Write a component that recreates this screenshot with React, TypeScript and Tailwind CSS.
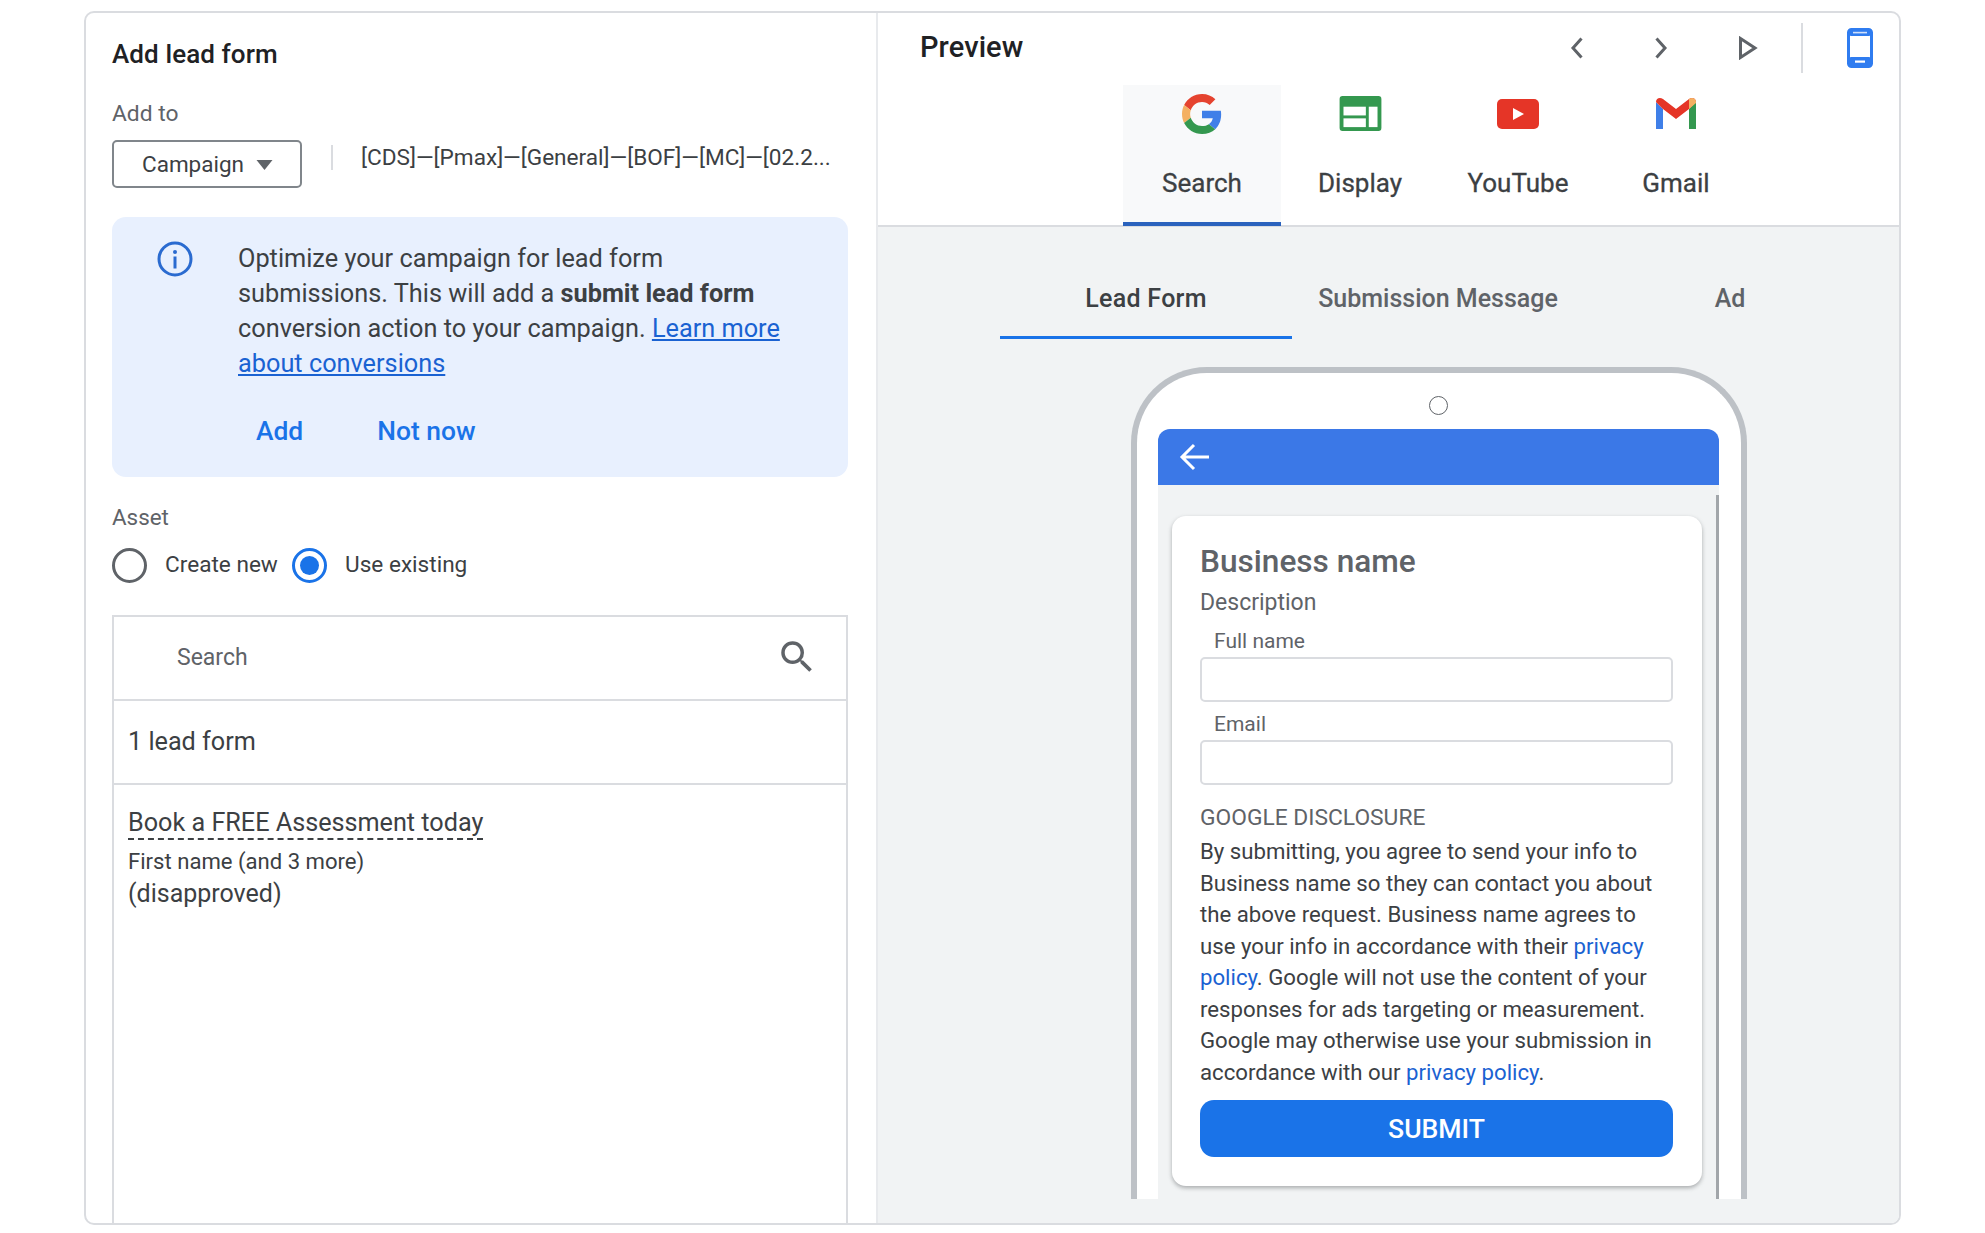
import React from "react";

function Field({ label }: { label: string }) {
  return (
    <div>
      <div className="ml-[14px] text-[21px] leading-[26px] text-[#5f6368]">{label}</div>
      <div className="mt-[3px] h-[45px] w-[473px] rounded-[5px] border-2 border-[#dadce0] bg-white" />
    </div>
  );
}

function ChannelTab({ label, active, children }: { label: string; active?: boolean; children: React.ReactNode }) {
  return (
    <div className={`flex h-[141px] w-[158px] flex-col items-center ${active ? "border-b-[4px] border-[#2a62bd] bg-[#f8f9fa]" : ""}`}>
      <div className="flex h-[56px] w-full items-center justify-center pt-[1px]">{children}</div>
      <div className="mt-[27px] text-[26px] leading-[30px] font-normal text-[#3c4043] [-webkit-text-stroke:0.3px_#3c4043]">{label}</div>
    </div>
  );
}

function SubTab({ label, active }: { label: string; active?: boolean }) {
  return (
    <div className={`flex h-[79px] w-[292px] items-center justify-center border-b-[3px] pt-[1px] text-[25px] font-medium ${active ? "border-[#1a73e8] tracking-[0.3px] text-[#3c4043]" : "border-transparent text-[#5f6368]"}`}>
      {label}
    </div>
  );
}

export default function App() {
  return (
    <div className="h-[1233px] w-[1985px] overflow-hidden bg-white pt-[11px] pl-[84px] font-['Roboto',sans-serif]">
      <div className="flex h-[1214px] w-[1817px] overflow-hidden rounded-[10px] border-2 border-[#dadce0] bg-white">
        {/* Left column */}
        <div className="flex h-full w-[792px] shrink-0 flex-col border-r-2 border-[#e8eaed] pr-[29px] pl-[26px]">
          <h1 className="mt-[25px] text-[26px] leading-[32px] font-medium tracking-[0.1px] text-[#202124]">Add lead form</h1>
          <div className="mt-[30px] text-[22.8px] leading-[28px] text-[#5f6368]">Add to</div>
          <div className="mt-[12px] flex items-start">
            <div className="flex h-[48px] w-[190px] items-center rounded-[5px] border-2 border-[#80868b] pt-[1px] pl-[28px] text-[22.5px] text-[#3c4043]">
              Campaign
              <svg viewBox="0 0 16 10" className="ml-[12px] h-[10px] w-[17px]"><path d="M0 0h16L8 10z" fill="#5f6368" /></svg>
            </div>
            <div className="mt-[5px] ml-[29px] h-[25px] w-[2px] bg-[#dadce0]" />
            <div className="ml-[28px] text-[22.6px] leading-[36px] whitespace-nowrap text-[#3c4043]">[CDS]—[Pmax]—[General]—[BOF]—[MC]—[02.2...</div>
          </div>

          <div className="mt-[29px] flex h-[260px] w-[736px] shrink-0 rounded-[14px] bg-[#e8f0fe]">
            <div className="mt-[24px] ml-[45px] h-[36px] w-[36px] shrink-0">
              <svg viewBox="0 0 36 36" className="h-[36px] w-[36px]" fill="none">
                <circle cx="18" cy="18" r="16" stroke="#2a6bd0" strokeWidth="3" />
                <circle cx="18" cy="11" r="2" fill="#2a6bd0" />
                <rect x="16.5" y="15.5" width="3" height="12" fill="#2a6bd0" />
              </svg>
            </div>
            <div className="ml-[45px] w-[570px]">
              <p className="mt-[24px] text-[25.3px] leading-[35px] text-[#3c4043]">
                Optimize your campaign for lead form submissions. This will add a <b className="font-bold">submit lead form</b> conversion action to your campaign.{" "}
                <a className="text-[#1a62d2] underline">Learn more about conversions</a>
              </p>
              <div className="mt-[35px] ml-[18px] flex gap-[74px] text-[26.4px] leading-[30px] font-medium text-[#1a73e8]">
                <span>Add</span>
                <span>Not now</span>
              </div>
            </div>
          </div>

          <div className="mt-[26px] text-[22.4px] leading-[28px] text-[#5f6368]">Asset</div>
          <div className="mt-[16px] flex h-[36px] items-center text-[22.6px] text-[#3c4043]">
            <div className="h-[35px] w-[35px] rounded-full border-[3px] border-[#5f6368]" />
            <span className="ml-[18px] w-[127px]">Create new</span>
            <div className="flex h-[35px] w-[35px] items-center justify-center rounded-full border-[3px] border-[#1a73e8]">
              <div className="h-[19px] w-[19px] rounded-full bg-[#1a73e8]" />
            </div>
            <span className="ml-[18px]">Use existing</span>
          </div>

          <div className="mt-[32px] flex w-[736px] flex-1 flex-col border-x-2 border-t-2 border-[#dadce0]">
            <div className="flex h-[84px] shrink-0 items-center border-b-2 border-[#dadce0] pr-[28px] pl-[63px] text-[23px] text-[#5f6368]">
              <span className="flex-1">Search</span>
              <svg viewBox="0 0 24 24" className="-mt-[3px] h-[42px] w-[42px]" fill="#5f6368">
                <path d="M15.5 14h-.79l-.28-.27A6.47 6.47 0 0 0 16 9.5 6.5 6.5 0 1 0 9.5 16c1.61 0 3.09-.59 4.23-1.57l.27.28v.79l5 4.99L20.49 19l-4.99-5zm-6 0C7.01 14 5 11.99 5 9.5S7.01 5 9.5 5 14 7.01 14 9.5 11.99 14 9.5 14z" />
              </svg>
            </div>
            <div className="flex h-[84px] shrink-0 items-center border-b-2 border-[#dadce0] pl-[14px] text-[25.2px] text-[#3c4043]">1 lead form</div>
            <div className="pt-[23px] pl-[14px] text-[#3c4043]">
              <div className="w-fit border-b-2 border-dashed border-[#3c4043] text-[25.2px] leading-[30px]">Book a FREE Assessment today</div>
              <div className="mt-[7px] text-[22.1px] leading-[28px]">First name (and 3 more)</div>
              <div className="mt-[3px] text-[25px] leading-[32px]">(disapproved)</div>
            </div>
          </div>
        </div>

        {/* Right column */}
        <div className="flex h-full flex-1 flex-col">
          <div className="flex h-[72px] shrink-0 items-center pb-[2px] pl-[42px] text-[#202124]">
            <span className="w-[106px] text-[29px] font-medium tracking-[0.1px]">Preview</span>
            <svg viewBox="0 0 16 24" className="ml-[543px] h-[24px] w-[16px]" fill="none" stroke="#5f6368" strokeWidth="3"><path d="M12.5 2.5 4 12l8.5 9.5" /></svg>
            <svg viewBox="0 0 16 24" className="ml-[68px] h-[24px] w-[16px]" fill="none" stroke="#5f6368" strokeWidth="3"><path d="M3.5 2.5 12 12l-8.5 9.5" /></svg>
            <svg viewBox="0 0 20 24" className="ml-[69px] h-[24px] w-[20px]" fill="none" stroke="#5f6368" strokeWidth="3"><path d="M2.5 2.5v19L17 12z" /></svg>
            <div className="ml-[43px] h-[50px] w-[2px] bg-[#dadce0]" />
            <svg viewBox="0 0 26 40" className="ml-[44px] h-[40px] w-[26px]" fill="none">
              <rect x="1.5" y="1.5" width="23" height="37" rx="3" fill="#fff" stroke="#2f7cf0" strokeWidth="3" />
              <rect x="2" y="2" width="22" height="6" rx="2" fill="#2f7cf0" />
              <rect x="6" y="3.8" width="14" height="1.6" fill="#cfe0fb" />
              <rect x="2" y="29" width="22" height="9" rx="2" fill="#2f7cf0" />
              <rect x="8" y="32.5" width="10" height="2.2" fill="#fff" />
            </svg>
          </div>
          <div className="flex h-[142px] shrink-0 justify-start border-b-2 border-[#dadce0] pl-[245px]">
            <ChannelTab label="Search" active>
              <svg viewBox="0 0 48 48" className="h-[40px] w-[40px]">
                <path fill="#e5432f" d="M24 9.5c3.54 0 6.71 1.22 9.21 3.6l6.85-6.85C35.9 2.38 30.47 0 24 0 14.62 0 6.51 5.38 2.56 13.22l7.98 6.19C12.43 13.72 17.74 9.5 24 9.5z" />
                <path fill="#3f7fe8" d="M46.98 24.55c0-1.57-.15-3.09-.38-4.55H24v9.02h12.94c-.58 2.96-2.26 5.48-4.78 7.18l7.73 6c4.51-4.18 7.09-10.36 7.09-17.65z" />
                <path fill="#f4b062" d="M10.53 28.59c-.48-1.45-.76-2.99-.76-4.59s.27-3.14.76-4.59l-7.98-6.19C.92 16.46 0 20.12 0 24c0 3.88.92 7.54 2.56 10.78l7.97-6.19z" />
                <path fill="#34984f" d="M24 48c6.48 0 11.93-2.13 15.89-5.81l-7.73-6c-2.15 1.45-4.92 2.3-8.16 2.3-6.26 0-11.57-4.22-13.47-9.91l-7.98 6.19C6.51 42.62 14.62 48 24 48z" />
              </svg>
            </ChannelTab>
            <ChannelTab label="Display">
              <svg viewBox="0 0 43 36" className="h-[35px] w-[43px]">
                <rect width="43" height="36" rx="3" fill="#34984f" />
                <rect x="4" y="11" width="23" height="9" fill="#fff" />
                <rect x="4" y="23" width="23" height="9" fill="#fff" />
                <rect x="30" y="11" width="9" height="21" fill="#fff" />
              </svg>
            </ChannelTab>
            <ChannelTab label="YouTube">
              <svg viewBox="0 0 42 30" className="h-[30px] w-[42px]">
                <rect width="42" height="30" rx="5" fill="#e53527" />
                <path d="M16 9v12l11-6z" fill="#fff" />
              </svg>
            </ChannelTab>
            <ChannelTab label="Gmail">
              <svg viewBox="0 0 40 31" className="h-[31px] w-[40px]">
                <path d="M0 4v27h7V11z" fill="#3f7fe8" />
                <path d="M33 11v20h7V4z" fill="#34984f" />
                <path d="M0 4C0 0 4-1 7 1l13 10L33 1c3-2 7-1 7 3l-7 7-13 10L7 11z" fill="#e53527" />
                <path d="M33 1c3-2 7-1 7 3v1l-7 6z" fill="#f4b062" />
              </svg>
            </ChannelTab>
          </div>

          <div className="flex flex-1 flex-col bg-[#f1f3f4]">
            <div className="mt-[33px] ml-[122px] flex shrink-0">
              <SubTab label="Lead Form" active />
              <SubTab label="Submission Message" />
              <SubTab label="Ad" />
            </div>
            <div className="mt-[28px] ml-[253px] flex h-[832px] w-[616px] shrink-0 flex-col rounded-t-[76px] border-x-[6px] border-t-[6px] border-[#bdc1c6] bg-white pr-[22px] pl-[21px]">
              <div className="flex h-[56px] shrink-0 items-center justify-center pt-[8px]">
                <div className="h-[19px] w-[19px] rounded-full border-[1.5px] border-[#5f6368]" />
              </div>
              <div className="flex h-[56px] shrink-0 items-center rounded-t-[12px] bg-[#3b78e7] pl-[21px]">
                <svg viewBox="0 0 30 28" className="h-[28px] w-[30px]" fill="none" stroke="#fff" strokeWidth="3"><path d="M30 14H3M15 2 3 14l12 12" /></svg>
              </div>
              <div className="relative flex-1 bg-[#f1f3f4] pt-[31px] pl-[14px]">
                <div className="absolute top-[10px] right-0 bottom-0 w-[3px] bg-[#a2a6aa]" />
                <div className="h-[670px] w-[530px] rounded-[14px] bg-white px-[28px] pt-[27px] shadow-[0_2px_4px_rgba(60,64,67,0.4)]">
                  <div className="text-[31.6px] leading-[38px] font-medium text-[#5f6368]">Business name</div>
                  <div className="mt-[8px] text-[23px] leading-[28px] text-[#5f6368]">Description</div>
                  <div className="mt-[11px]"><Field label="Full name" /></div>
                  <div className="mt-[9px]"><Field label="Email" /></div>
                  <div className="mt-[19px] text-[22.8px] leading-[28px] text-[#5f6368]">GOOGLE DISCLOSURE</div>
                  <p className="mt-[4px] text-[22.2px] leading-[31.5px] text-[#3c4043]">
                    By submitting, you agree to send your info to Business name so they can contact you about the above request. Business name agrees to use your info in accordance with their <a className="text-[#1a62d2]">privacy policy</a>. Google will not use the content of your responses for ads targeting or measurement. Google may otherwise use your submission in accordance with our <a className="text-[#1a62d2]">privacy policy</a>.
                  </p>
                  <div className="mt-[12px] flex h-[57px] w-[473px] items-center justify-center rounded-[14px] bg-[#1a73e8] pt-[1px] text-[26.6px] font-medium text-white">SUBMIT</div>
                </div>
              </div>
            </div>
          </div>
        </div>
      </div>
    </div>
  );
}
